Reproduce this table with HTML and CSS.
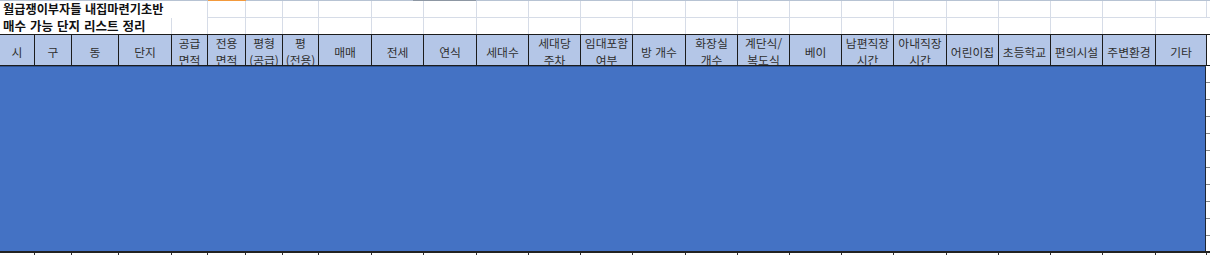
FILE: index.html
```html
<!DOCTYPE html>
<html lang="ko">
<head>
<meta charset="utf-8">
<link rel="stylesheet" href="styles.css">
</head>
<body>
<div class="sheet">
  <div class="topline"></div>
  <div class="grid r1">
    <div class="cell title t1">월급쟁이부자들 내집마련기초반</div>
    <div class="cell"></div><div class="cell"></div><div class="cell"></div><div class="cell"></div><div class="cell"></div>
    <div class="cell"></div><div class="cell"></div><div class="cell"></div><div class="cell"></div><div class="cell"></div>
    <div class="cell"></div><div class="cell"></div><div class="cell"></div><div class="cell"></div><div class="cell"></div>
    <div class="cell"></div><div class="cell"></div><div class="cell"></div><div class="cell"></div><div class="cell"></div>
    <div class="cell last"></div>
  </div>
  <div class="grid r2">
    <div class="cell title t2">매수 가능 단지 리스트 정리</div>
    <div class="cell"></div><div class="cell"></div><div class="cell"></div><div class="cell"></div><div class="cell"></div><div class="cell"></div><div class="cell"></div>
    <div class="cell"></div><div class="cell"></div><div class="cell"></div><div class="cell"></div><div class="cell"></div><div class="cell"></div><div class="cell"></div>
    <div class="cell"></div><div class="cell"></div><div class="cell"></div><div class="cell"></div><div class="cell"></div><div class="cell"></div>
    <div class="cell last"></div>
  </div>
  <div class="grid head">
    <div class="hc">시</div>
    <div class="hc">구</div>
    <div class="hc">동</div>
    <div class="hc">단지</div>
    <div class="hc">공급<br>면적</div>
    <div class="hc">전용<br>면적</div>
    <div class="hc">평형<br>(공급)</div>
    <div class="hc">평<br>(전용)</div>
    <div class="hc">매매</div>
    <div class="hc">전세</div>
    <div class="hc">연식</div>
    <div class="hc">세대수</div>
    <div class="hc">세대당<br>주차</div>
    <div class="hc">임대포함<br>여부</div>
    <div class="hc">방 개수</div>
    <div class="hc">화장실<br>개수</div>
    <div class="hc">계단식/<br>복도식</div>
    <div class="hc">베이</div>
    <div class="hc">남편직장<br>시간</div>
    <div class="hc">아내직장<br>시간</div>
    <div class="hc">어린이집</div>
    <div class="hc">초등학교</div>
    <div class="hc">편의시설</div>
    <div class="hc">주변환경</div>
    <div class="hc">기타</div>
    <div class="hfill"></div>
  </div>
  <div class="body">
    <div class="shape"></div>
    <div class="gutter"></div>
  </div>
  <div class="grid foot">
    <div class="tk"></div><div class="tk"></div><div class="tk"></div><div class="tk"></div><div class="tk"></div>
    <div class="tk"></div><div class="tk"></div><div class="tk"></div><div class="tk"></div><div class="tk"></div>
    <div class="tk"></div><div class="tk"></div><div class="tk"></div><div class="tk"></div><div class="tk"></div>
    <div class="tk"></div><div class="tk"></div><div class="tk"></div><div class="tk"></div><div class="tk"></div>
    <div class="tk"></div><div class="tk"></div><div class="tk"></div><div class="tk"></div><div class="tk"></div>
    <div></div>
  </div>
</div>
</body>
</html>
```

FILE: styles.css
```css
* { box-sizing: border-box; }
html, body { margin: 0; padding: 0; background: #fff; }
body {
  width: 1210px;
  height: 255px;
  overflow: hidden;
  font-family: "Noto Sans CJK KR", "Noto Sans", sans-serif;
}
.sheet { width: 1210px; }

.topline {
  height: 1px;
  background: linear-gradient(to right,
    #b7c3d3 0 208px,
    #f39a3c 208px 246px,
    #b7c3d3 246px 413px,
    #8d97a3 413px 476px,
    #b7c3d3 476px);
}

.grid {
  display: grid;
  grid-template-columns: 35px 37px 47px 53px 36px 38px 37px 36px 53px 52px 53px 52px 52px 52px 53px 52px 52px 52px 52px 53px 52px 52px 52px 53px 51px 1fr;
}

.r1 { height: 17px; }
.r2 { height: 16px; }

.cell {
  border-right: 1px solid #d6dce7;
  border-bottom: 1px solid #d6dce7;
}
.cell.last { border-right: 0; }
.r2 .cell { border-bottom: 0; }

.title {
  color: #111;
  font-weight: 700;
  white-space: nowrap;
  padding-left: 3px;
  overflow: visible;
}
.t1 {
  grid-column: span 5;
  border-bottom: 0;
  font-size: 12.2px;
  line-height: 17px;
}
.t2 {
  grid-column: span 4;
  font-size: 12.5px;
  line-height: 16px;
  word-spacing: 0.5px;
}

.head {
  height: 32px;
  border-top: 1px solid #1c1c1c;
  border-bottom: 1px solid #1c1c1c;
}
.hc {
  background: #b4c6e7;
  border-right: 1px solid #1c1c1c;
  color: #2e2e2e;
  font-size: 11.8px;
  line-height: 17px;
  padding-top: 2px;
  white-space: nowrap;
  text-align: center;
  display: flex;
  align-items: center;
  justify-content: center;
  overflow: hidden;
}
.hfill { background: #fff; }

.body {
  display: flex;
  height: 185px;
}
.shape {
  width: 1206px;
  background: #4472c4;
  border-top: 1px solid #2f528f;
  border-right: 1px solid #1e2633;
}
.gutter {
  flex: 1;
  background: repeating-linear-gradient(to bottom,
    transparent 0 16px,
    #8a8a8a 16px 17px);
}

.foot {
  height: 4px;
  border-top: 2px solid #222;
}
.tk { border-right: 1px solid #333; }
```
